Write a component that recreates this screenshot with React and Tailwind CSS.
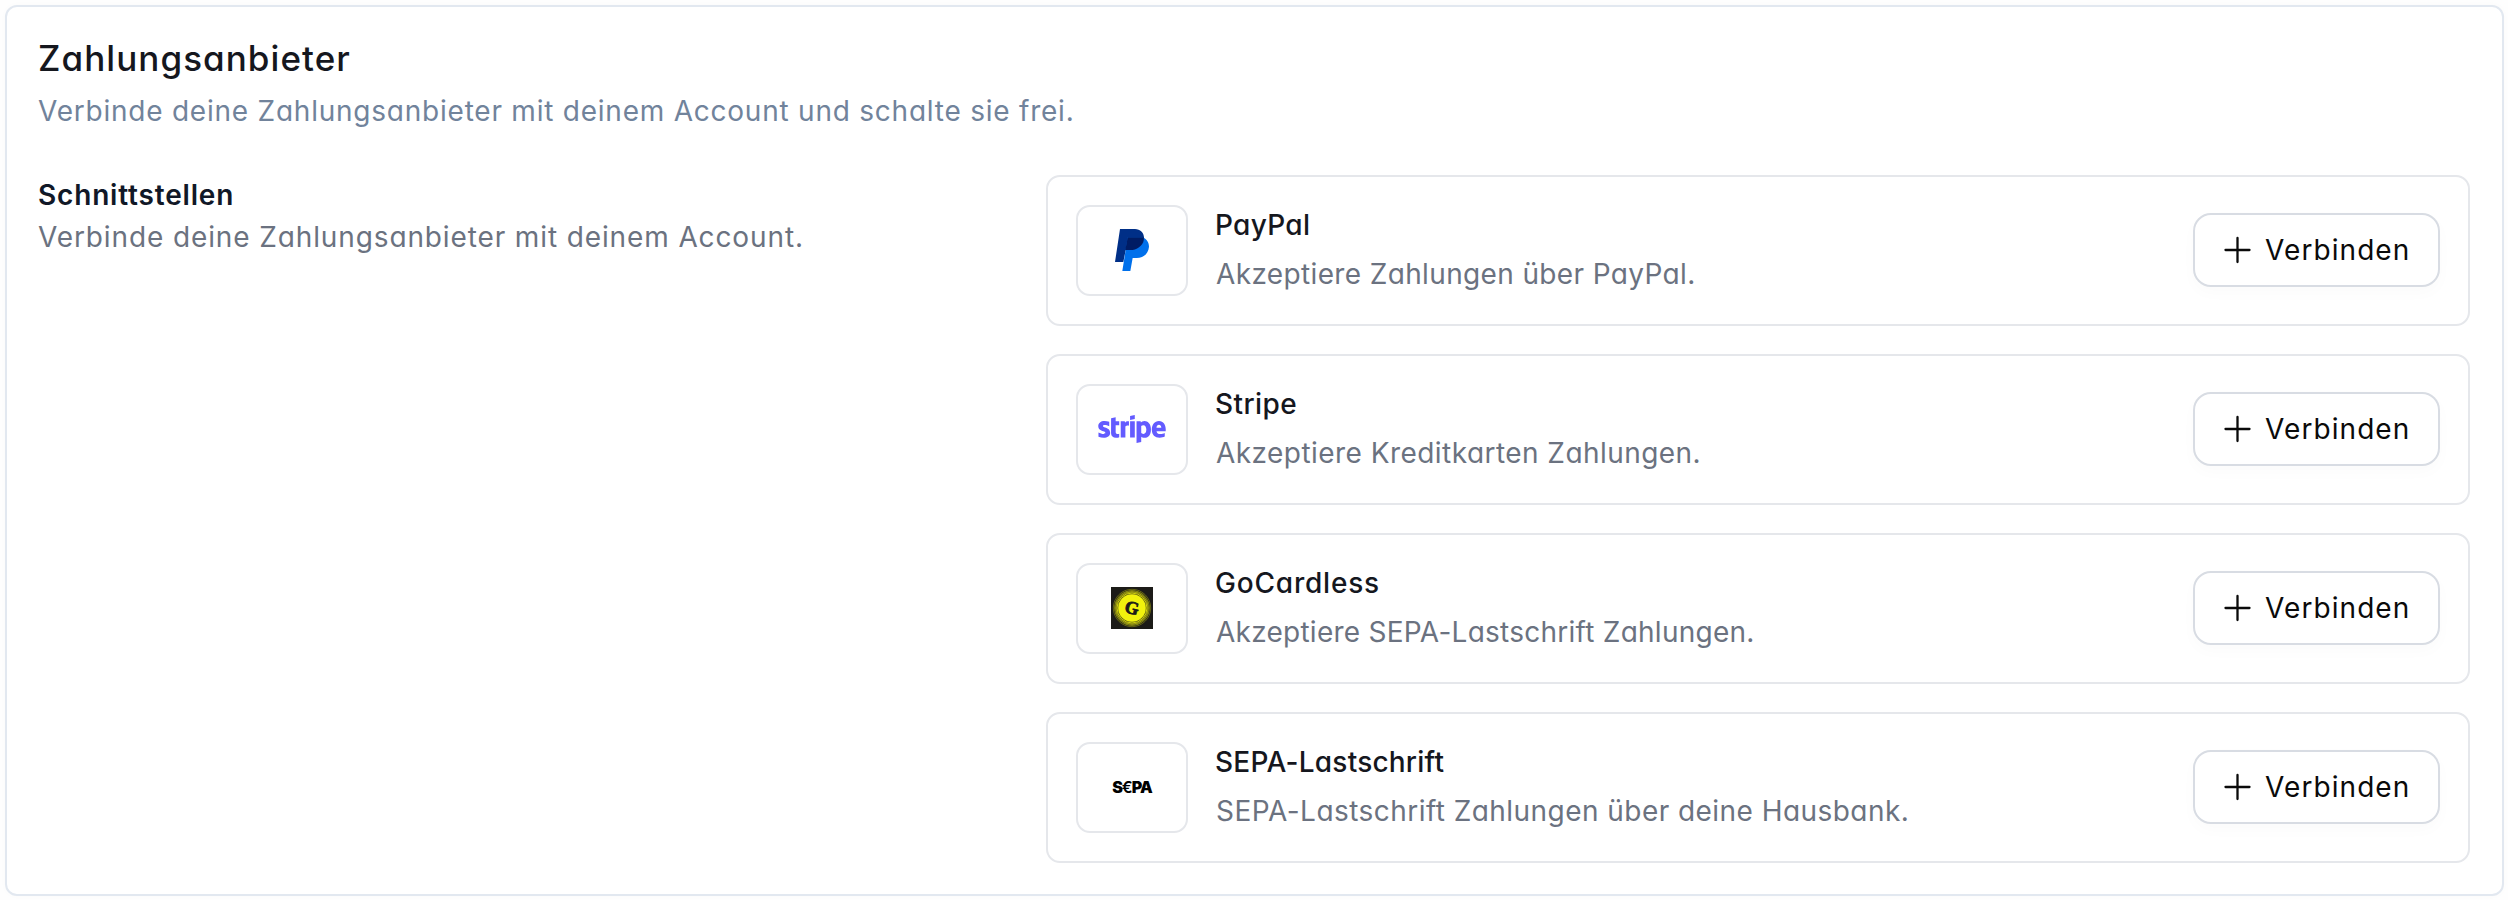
import React from "react";
import { FaStripe } from "react-icons/fa";

const PayPalLogo = () => (
    <svg className="mb-px" width="34" height="42" viewBox="0 0 102 126">
        <path fill="#002f87" d="M15 0H60C76 0 88 12 87 28C85 50 67 64 48 64H32L25 99H0Z" />
        <path fill="#0070eb" d="M38 25H83C96 30 102 42 102 53C100 74 85 87 65 87H53L46 126H22Z" />
        <path fill="#001c64" d="M38 25H86.500C89 45 71 61 53 63H31Z" />
    </svg>
);

const StripeLogo = () => <FaStripe className="mb-[2px] w-[68px] h-[54px] text-[#635bff]" />;

const GoCardlessLogo = () => (
    <svg className="mb-[2px]" width="42" height="42" viewBox="0 0 42 42">
        <rect width="42" height="42" fill="#1c1b18" />
        <circle cx="21" cy="21" r="17.500" fill="#8c8d10" fillOpacity="0.55" />
        <circle cx="21" cy="21" r="18.700" fill="none" stroke="#a5a60f" strokeWidth="0.5" />
        <circle cx="21" cy="21" r="17.400" fill="none" stroke="#b4b50f" strokeWidth="0.6" />
        <circle cx="21" cy="21" r="16.200" fill="none" stroke="#c8c90e" strokeWidth="0.7" />
        <circle cx="21" cy="21" r="15" fill="none" stroke="#dcdd0e" strokeWidth="0.9" />
        <circle cx="21" cy="21" r="13.800" fill="#f1f20d" />
        <text
            x="21"
            y="27"
            textAnchor="middle"
            transform="rotate(14 21 21)"
            className="font-['Liberation_Serif',serif] text-[18px] font-bold fill-[#1c1b18] stroke-[#1c1b18]"
            strokeWidth="0.8"
        >
            G
        </text>
    </svg>
);

const SepaLogo = () => (
    <div className="mb-[2px] flex items-center font-['Inter',sans-serif] text-[16px] leading-[24px] font-black text-black">
        <span>S</span>
        <span className="-ml-px font-semibold">€</span>
        <span className="-ml-px tracking-[-0.8px]">PA</span>
    </div>
);

const providers = [
    {
        name: "PayPal",
        nameClass: "tracking-[0.3px]",
        text: "Akzeptiere Zahlungen über PayPal.",
        textClass: "tracking-[0.36px]",
        Logo: PayPalLogo,
    },
    {
        name: "Stripe",
        nameClass: "tracking-[0.4px]",
        text: "Akzeptiere Kreditkarten Zahlungen.",
        textClass: "tracking-[0.45px]",
        Logo: StripeLogo,
    },
    {
        name: "GoCardless",
        nameClass: "tracking-[0.8px]",
        text: "Akzeptiere SEPA-Lastschrift Zahlungen.",
        textClass: "tracking-[0.25px]",
        Logo: GoCardlessLogo,
    },
    {
        name: "SEPA-Lastschrift",
        nameClass: "tracking-[0.22px]",
        text: "SEPA-Lastschrift Zahlungen über deine Hausbank.",
        textClass: "tracking-[0.45px]",
        Logo: SepaLogo,
    },
];

const ConnectButton = () => (
    <button className="mt-2 h-[74px] w-[247px] shrink-0 flex items-center gap-3.5 pl-7 bg-white border-2 border-[#d8dce3] rounded-[18px] shadow-[0_6px_16px_rgba(0,0,0,0.02)]">
        <svg width="28" height="28" viewBox="0 0 28 28" fill="none" stroke="#0a0a0a" strokeWidth="2.3" strokeLinecap="round">
            <path d="M14.500 2V26M2.500 14H26.500" />
        </svg>
        <span className="pb-px text-[28px] leading-[42px] tracking-[1.08px] text-[#0a0a0a]">Verbinden</span>
    </button>
);

const ProviderCard = ({ name, nameClass, text, textClass, Logo }) => (
    <div className="h-[151px] flex items-start p-7 border-2 border-[#e5e7eb] rounded-[14px]">
        <div className="w-[112px] h-[91px] shrink-0 flex items-center justify-center border-2 border-[#e5e7eb] rounded-[14px]">
            <Logo />
        </div>
        <div className="ml-7 flex-1">
            <h4 className={`-ml-px pt-px text-[28px] leading-[39px] font-medium text-[#15171e] ${nameClass}`}>{name}</h4>
            <p className={`mt-2 text-[28px] leading-[42px] text-[#6b7280] ${textClass}`}>{text}</p>
        </div>
        <ConnectButton />
    </div>
);

const App = () => {
    return (
        <div className="h-[900px] bg-[#fefefe] pl-[5px] pt-[5px] font-['Inter',sans-serif] [font-feature-settings:'cv11']">
            <div className="w-[2499px] h-[891px] pl-[31px] pr-8 pt-[30px] bg-white border-2 border-[#e2e8f0] rounded-[12px] shadow-[0_0_6px_rgba(0,0,0,0.02)]">
                <h2 className="text-[35px] leading-[42px] tracking-[1.06px] font-medium text-[#15171e]">Zahlungsanbieter</h2>
                <p className="mt-[11px] text-[28px] leading-[42px] tracking-[0.77px] text-[#71839b]">
                    Verbinde deine Zahlungsanbieter mit deinem Account und schalte sie frei.
                </p>

                <div className="mt-[43px] flex justify-between">
                    <div>
                        <h3 className="pt-px text-[28px] leading-[39px] tracking-[0.82px] font-semibold text-[#111827]">Schnittstellen</h3>
                        <p className="mt-px text-[28px] leading-[42px] tracking-[0.88px] text-[#6b7280]">
                            Verbinde deine Zahlungsanbieter mit deinem Account.
                        </p>
                    </div>
                    <div className="w-[1424px] flex flex-col gap-7">
                        {providers.map((p) => (
                            <ProviderCard key={p.name} {...p} />
                        ))}
                    </div>
                </div>
            </div>
        </div>
    );
};

export default App;
